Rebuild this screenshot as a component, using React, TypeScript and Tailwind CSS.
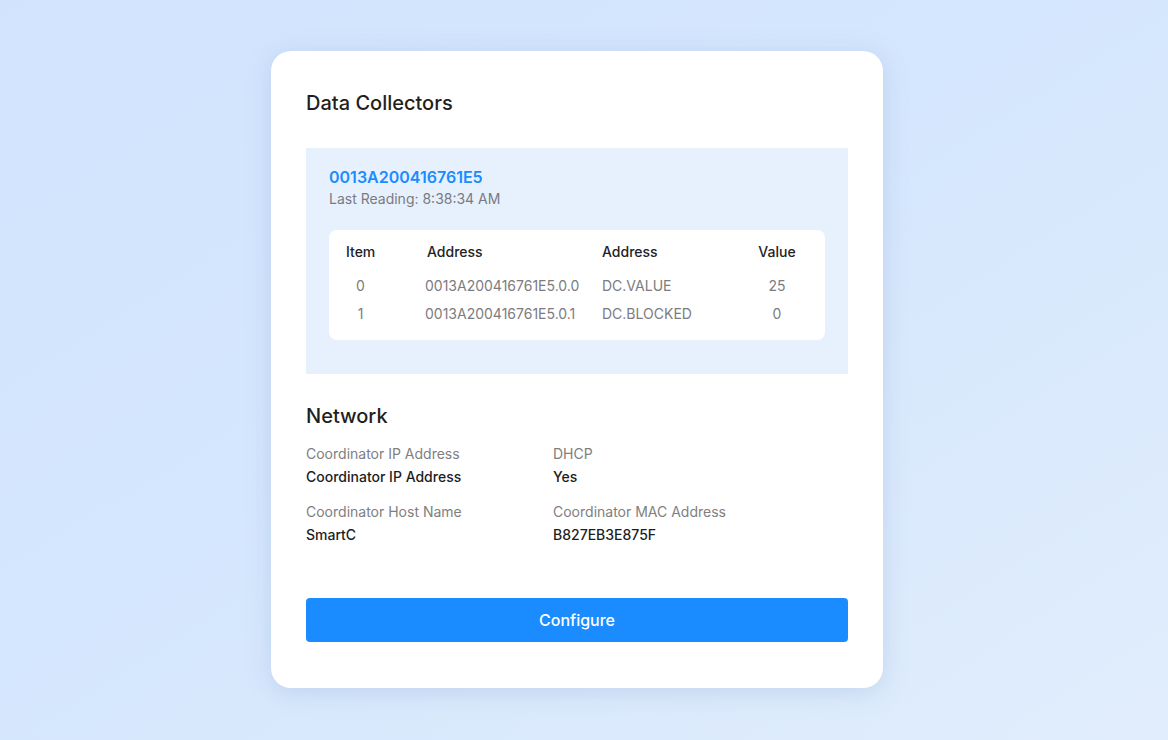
import React from "react";

const rows = [
  { item: "0", addr: "0013A200416761E5.0.0", name: "DC.VALUE", value: "25" },
  { item: "1", addr: "0013A200416761E5.0.1", name: "DC.BLOCKED", value: "0" },
];

function Field({ label, value }: { label: string; value: string }) {
  return (
    <div className="flex flex-col">
      <span className="text-[14px] leading-[20px] text-[#808080]">{label}</span>
      <span className="mt-[3px] text-[14px] leading-[20px] font-medium text-[#1d1d1f]">{value}</span>
    </div>
  );
}

export default function App() {
  return (
    <div
      className="w-[1168px] h-[740px] flex items-start justify-center pr-[14px] bg-gradient-to-br from-[#d2e4fd] via-[#d5e7fd] to-[#e1edfc]"
      style={{ fontFamily: "Inter, 'Noto Sans', sans-serif" }}
    >
      <div className="mt-[51px] w-[612px] bg-white rounded-[20px] shadow-[0_4px_24px_rgba(120,150,200,0.25)] px-[35px] pt-[40px] pb-[46px]">
        <h2 className="text-[20px] leading-[24px] font-medium text-[#1f1f22]">Data Collectors</h2>

        <div className="mt-[33px] bg-[#e7f1fe] px-[23px] pt-[19px] pb-[34px]">
          <div className="text-[16px] leading-[20px] font-semibold text-[#1a8cff]">0013A200416761E5</div>
          <div className="mt-[2px] text-[14px] leading-[20px] text-[#7a7a80]">Last Reading: 8:38:34 AM</div>

          <div className="mt-[21px] bg-white rounded-[8px] pl-[17px] pr-[23px] pt-[11px] pb-[17px]">
            <div className="grid grid-cols-[81px_175px_1fr_50px] h-[20px] items-center text-[14px] font-medium text-[#222225]">
              <span className="w-[29px] text-center">Item</span>
              <span>Address</span>
              <span>Address</span>
              <span className="text-center">Value</span>
            </div>
            <div className="mt-[14px] flex flex-col gap-[8px]">
              {rows.map((r) => (
                <div
                  key={r.item}
                  className="grid grid-cols-[79px_177px_1fr_50px] h-[20px] items-center text-[14px] text-[#7c7c80]"
                >
                  <span className="w-[29px] text-center">{r.item}</span>
                  <span>{r.addr}</span>
                  <span>{r.name}</span>
                  <span className="text-center">{r.value}</span>
                </div>
              ))}
            </div>
          </div>
        </div>

        <h2 className="mt-[30px] text-[20px] leading-[24px] font-medium text-[#1f1f22]">Network</h2>

        <div className="mt-[16px] grid grid-cols-[247px_1fr] gap-y-[15px]">
          <Field label="Coordinator IP Address" value="Coordinator IP Address" />
          <Field label="DHCP" value="Yes" />
          <Field label="Coordinator Host Name" value="SmartC" />
          <Field label="Coordinator MAC Address" value="B827EB3E875F" />
        </div>

        <button className="mt-[53px] w-full h-[44px] rounded-[4px] bg-[#1a8cff] text-white text-[16px] font-medium">
          Configure
        </button>
      </div>
    </div>
  );
}
